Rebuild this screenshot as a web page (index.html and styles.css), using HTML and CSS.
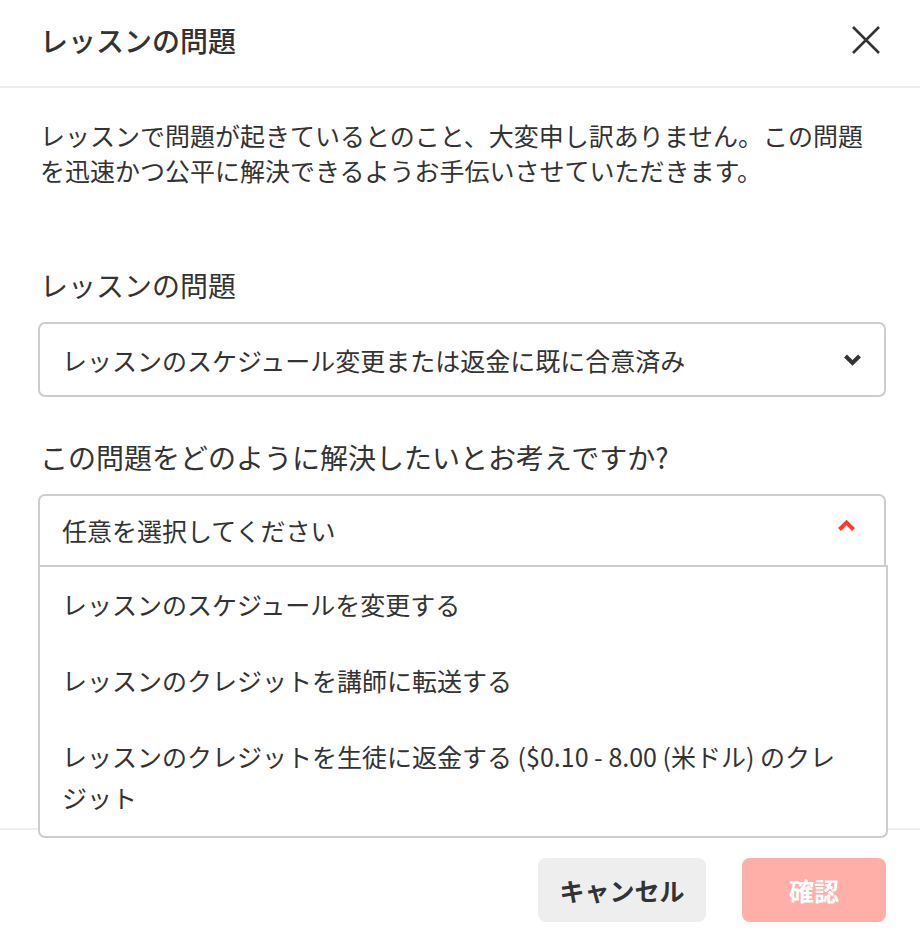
FILE: index.html
```html
<!DOCTYPE html>
<html lang="ja">
<head>
<meta charset="utf-8">
<link rel="stylesheet" href="styles.css">
</head>
<body>
<div class="modal">
  <div class="header">
    <h1 class="title">レッスンの問題</h1>
    <svg class="close" width="30" height="30" viewBox="0 0 30 30"><path d="M2 2 L28 28 M28 2 L2 28" stroke="#333" stroke-width="2.6" fill="none"/></svg>
  </div>
  <div class="body">
    <p class="intro">レッスンで問題が起きているとのこと、大変申し訳ありません。この問題を迅速かつ公平に解決できるようお手伝いさせていただきます。</p>
    <div class="field field-first">
      <div class="label">レッスンの問題</div>
      <div class="select">
        <span class="select-text">レッスンのスケジュール変更または返金に既に合意済み</span>
        <svg class="chev-down" width="19" height="13" viewBox="0 0 19 13"><path d="M2.5 3 L9.5 10 L16.5 3" stroke="#333" stroke-width="4" fill="none" stroke-linejoin="miter"/></svg>
      </div>
    </div>
    <div class="field">
      <div class="label">この問題をどのように解決したいとお考えですか?</div>
      <div class="select select-open">
        <span class="select-text">任意を選択してください</span>
        <svg class="chev-up" width="19" height="13" viewBox="0 0 19 13"><path d="M2.5 10.5 L9.5 3.5 L16.5 10.5" stroke="#ff3b30" stroke-width="4" fill="none"/></svg>
        <ul class="options">
          <li class="option">レッスンのスケジュールを変更する</li>
          <li class="option">レッスンのクレジットを講師に転送する</li>
          <li class="option">レッスンのクレジットを生徒に返金する ($0.10 - 8.00 (米ドル) のクレジット</li>
        </ul>
      </div>
    </div>
  </div>
  <div class="footer">
    <button class="btn btn-cancel">キャンセル</button>
    <button class="btn btn-confirm">確認</button>
  </div>
</div>
</body>
</html>
```

FILE: styles.css
```css
* { box-sizing: border-box; }
html, body { margin: 0; padding: 0; background: #fff; }
body {
  font-family: "Noto Sans CJK JP", "Noto Sans", sans-serif;
  color: #333;
}
.modal {
  width: 920px;
  height: 950px;
  display: flex;
  flex-direction: column;
  background: #fff;
}
.header {
  height: 88px;
  border-bottom: 2px solid #efefef;
  display: flex;
  justify-content: space-between;
  align-items: flex-start;
  padding: 20px 40px 0 40px;
  flex: none;
}
.title {
  margin: 0;
  font-size: 28px;
  line-height: 40px;
  font-weight: 500;
  color: #333;
}
.close {
  margin-top: 5px;
  margin-right: -1px;
}
.body {
  flex: 1;
  padding: 0 34px 0 40px;
}
.intro {
  margin: 30px 0 0 0;
  font-size: 25px;
  line-height: 35px;
  width: 842px;
}
.field { margin-top: 40px; }
.field-first { margin-top: 77px; }
.label {
  font-size: 28px;
  line-height: 40px;
  margin-bottom: 17px;
}
.select {
  position: relative;
  margin-left: -2px;
  width: 848px;
  height: 75px;
  border: 2px solid #cdcdcd;
  border-radius: 7px;
  display: flex;
  align-items: center;
  padding-left: 22px;
}
.select-text {
  font-size: 25px;
  line-height: 40px;
}
.chev-down {
  position: absolute;
  right: 22px;
  top: 29px;
}
.select-open {
  height: 73px;
  border-bottom-left-radius: 0;
  border-bottom-right-radius: 0;
  padding-bottom: 2px;
}
.chev-up {
  position: absolute;
  right: 28px;
  top: 23px;
}
.options {
  position: absolute;
  left: -2px;
  right: -4px;
  top: 69px;
  margin: 0;
  padding: 0;
  list-style: none;
  background: #fff;
  border: 2px solid #cdcdcd;
  border-radius: 0 0 7px 7px;
  z-index: 2;
}
.option {
  font-size: 25px;
  line-height: 41px;
  padding: 17px 40px 18px 22px;
}
.footer {
  flex: none;
  border-top: 2px solid #efefef;
  padding: 28px 34px 28px 40px;
  display: flex;
  justify-content: flex-end;
  gap: 36px;
}
.btn {
  height: 64px;
  border: none;
  border-radius: 8px;
  font-family: "Noto Sans CJK JP", "Noto Sans", sans-serif;
  font-size: 25px;
  font-weight: 700;
  padding: 0;
}
.btn-cancel {
  width: 168px;
  background: #eeeeee;
  color: #333;
}
.btn-confirm {
  width: 144px;
  background: #ffaea8;
  color: #fff;
}
```
